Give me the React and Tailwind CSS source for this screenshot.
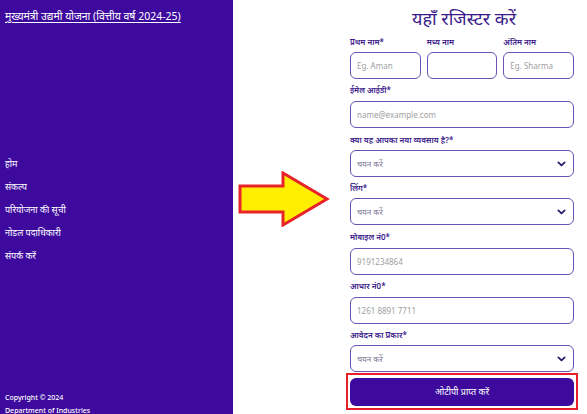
import React from 'react';

const font = { fontFamily: '"Noto Sans", "Noto Sans Devanagari", "Lohit Devanagari", sans-serif' };

const navItems = ['होम', 'संकल्प', 'परियोजना की सूची', 'नोडल पदाधिकारी', 'संपर्क करें'];

const Label = ({ children }) => (
    <div className="text-[8px] leading-[11px] font-semibold text-[#3b1a8a] h-[11px]">{children}</div>
);

const TextInput = ({ placeholder, className = '' }) => (
    <input
        placeholder={placeholder}
        className={`h-[27px] w-full rounded-[6px] border-[1.5px] border-[#6a51b5] bg-white px-[6px] text-[8px] text-[#333] placeholder:text-[#a0a0a0] outline-none ${className}`}
        style={font}
    />
);

const SelectBox = () => (
    <div className="h-[27px] w-full rounded-[6px] border-[1.5px] border-[#6a51b5] bg-white px-[6px] flex items-center justify-between">
        <span className="text-[8px] text-[#7b7396]">चयन करें</span>
        <svg width="9" height="6" viewBox="0 0 10 6" className="mr-[1px]">
            <path d="M1.5 1.2 L5 4.6 L8.5 1.2" fill="none" stroke="#2b1a6b" strokeWidth="2" strokeLinecap="round" strokeLinejoin="round" />
        </svg>
    </div>
);

const Arrow = () => (
    <svg width="92" height="56" viewBox="0 0 92 56">
        <polygon
            points="2,15 45,15 45,2 89,28 45,54 45,41 2,41"
            fill="#ffee00"
            stroke="#e8242a"
            strokeWidth="3"
            strokeLinejoin="miter"
        />
    </svg>
);

export default function App() {
    return (
        <div className="flex w-[587px] h-[414px] bg-white overflow-hidden" style={font}>
            {/* Sidebar */}
            <aside className="w-[233px] h-full bg-[#3d0a9d] text-white flex flex-col px-[5px]">
                <a className="mt-[7px] text-[10.5px] leading-[18px] underline underline-offset-2">
                    मुख्यमंत्री उद्यमी योजना (वित्तीय वर्ष 2024-25)
                </a>
                <nav className="mt-[131px] flex flex-col gap-[8px]">
                    {navItems.map((item) => (
                        <div key={item} className="text-[9px] leading-[15px]">{item}</div>
                    ))}
                </nav>
                <div className="mt-auto mb-[-3px] text-[7px] leading-[13px] font-medium">
                    <div>Copyright © 2024</div>
                    <div>Department of Industries</div>
                </div>
            </aside>

            {/* Main */}
            <main className="flex-1 flex">
                <div className="w-[117px] flex items-start pt-[171px] pl-[5px]">
                    <Arrow />
                </div>
                <div className="w-[224px] flex flex-col">
                    <h1 className="text-center text-[18px] leading-[24px] font-normal text-[#3b1a8a] mt-[6px] ml-[4px]">यहाँ रजिस्टर करें</h1>

                    <div className="mt-[6px] grid grid-cols-3 gap-x-[6px]">
                        <Label>प्रथम नाम*</Label>
                        <Label>मध्य नाम</Label>
                        <Label>अंतिम नाम</Label>
                    </div>
                    <div className="mt-[5px] grid grid-cols-3 gap-x-[6px]">
                        <TextInput placeholder="Eg. Aman" />
                        <TextInput placeholder="" />
                        <TextInput placeholder="Eg. Sharma" />
                    </div>

                    <div className="mt-[5px]"><Label>ईमेल आईडी*</Label></div>
                    <div className="mt-[5px]"><TextInput placeholder="name@example.com" /></div>

                    <div className="mt-[6px]"><Label>क्या यह आपका नया व्यवसाय है?*</Label></div>
                    <div className="mt-[5px]"><SelectBox /></div>

                    <div className="mt-[5px]"><Label>लिंग*</Label></div>
                    <div className="mt-[5px]"><SelectBox /></div>

                    <div className="mt-[6px]"><Label>मोबाइल नं0*</Label></div>
                    <div className="mt-[5px]"><TextInput placeholder="9191234864" /></div>

                    <div className="mt-[5px]"><Label>आधार नं0*</Label></div>
                    <div className="mt-[5px]"><TextInput placeholder="1261 8891 7711" /></div>

                    <div className="mt-[5px]"><Label>आवेदन का प्रकार*</Label></div>
                    <div className="mt-[5px]"><SelectBox /></div>

                    <div className="mt-[1px] -mx-[4px] border-[2.5px] border-[#e5202a] p-[2px]">
                        <button className="w-full h-[28px] rounded-[6px] bg-[#3d0a9d] text-white text-[9px]">
                            ओटीपी प्राप्त करें
                        </button>
                    </div>
                </div>
            </main>
        </div>
    );
}
